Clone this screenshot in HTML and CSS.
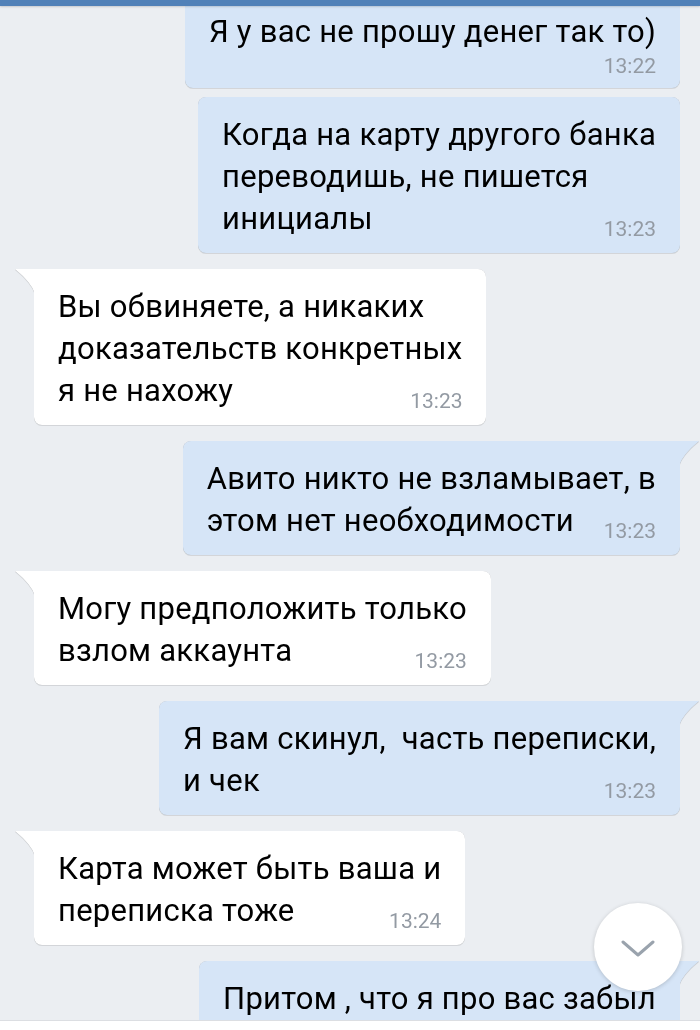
FILE: index.html
```html
<!DOCTYPE html>
<html lang="ru">
<head>
<meta charset="utf-8">
<title>Чат</title>
<link rel="stylesheet" href="styles.css">
</head>
<body>
<div class="screen">
  <div class="topbar"></div>
  <div class="chat">
    <div class="list">
      <div class="row out">
        <div class="bubble out">Я у вас не прошу денег так то)<span class="time below">13:22</span></div>
      </div>
      <div class="row out cont">
        <div class="bubble out">Когда на карту другого банка<br>переводишь, не пишется<br>инициалы<span class="time">13:23</span></div>
      </div>
      <div class="row in">
        <div class="bubble in tail">Вы обвиняете, а никаких<br>доказательств конкретных<br>я не нахожу<span class="time">13:23</span></div>
      </div>
      <div class="row out">
        <div class="bubble out tail">Авито никто не взламывает, в<br>этом нет необходимости<span class="time">13:23</span></div>
      </div>
      <div class="row in">
        <div class="bubble in tail">Могу предположить только<br>взлом аккаунта<span class="time">13:23</span></div>
      </div>
      <div class="row out">
        <div class="bubble out tail">Я вам скинул,&nbsp; часть переписки,<br>и чек<span class="time">13:23</span></div>
      </div>
      <div class="row in">
        <div class="bubble in tail">Карта может быть ваша и<br>переписка тоже<span class="time">13:24</span></div>
      </div>
      <div class="row out">
        <div class="bubble out tail last">Притом , что я про вас забыл</div>
      </div>
    </div>
    <button class="scroll-down" aria-label="Вниз">
      <svg width="34" height="18" viewBox="0 0 34 18"><path d="M2 2 L17 15 L32 2" fill="none" stroke="#9aa3ad" stroke-width="3" stroke-linecap="round" stroke-linejoin="round"/></svg>
    </button>
  </div>
  <div class="footer"></div>
</div>
</body>
</html>
```
FILE: styles.css
```css
* { box-sizing: border-box; }
html, body {
  margin: 0;
  padding: 0;
  background: #ebeef2;
}
.screen {
  width: 700px;
  height: 1030px;
  display: flex;
  flex-direction: column;
  overflow: hidden;
  font-family: Roboto, "Noto Sans", sans-serif;
}
.topbar {
  height: 6px;
  flex: none;
  background: #5181b8;
  box-shadow: 0 1px 2px rgba(0,0,0,0.15);
  z-index: 2;
}
.chat {
  position: relative;
  flex: 1;
  overflow: hidden;
}
.list {
  display: flex;
  flex-direction: column;
  gap: 16px;
  margin-top: -12px;
}
.row {
  display: flex;
}
.row.out {
  justify-content: flex-end;
  padding-right: 20px;
}
.row.in {
  justify-content: flex-start;
  padding-left: 34px;
}
.row.cont {
  margin-top: -7px;
}
.bubble {
  position: relative;
  padding: 17px 24px 13px 24px;
  font-size: 31px;
  line-height: 42px;
  letter-spacing: 0.25px;
  color: #000;
  border-radius: 8px;
  filter: drop-shadow(0 0 0.6px rgba(0,0,0,0.22)) drop-shadow(0 1px 0.6px rgba(0,0,0,0.10));
}
.bubble.last {
  padding-bottom: 40px;
}
.bubble.in {
  background: #ffffff;
}
.bubble.out {
  background: #d6e5f7;
}
.bubble.in.tail { border-top-left-radius: 0; }
.bubble.out.tail { border-top-right-radius: 0; }
.bubble.tail::before {
  content: "";
  position: absolute;
  top: 0;
  width: 20px;
  height: 25px;
}
.bubble.in.tail::before {
  left: -19px;
  background: #ffffff;
  clip-path: path("M0 0 L20 0 L20 25 Q17 14 0 0 Z");
}
.bubble.out.tail::before {
  right: -19px;
  background: #d6e5f7;
  clip-path: path("M20 0 L0 0 L0 25 Q3 14 20 0 Z");
}
.time {
  float: right;
  margin-left: 24px;
  margin-top: 21px;
  font-size: 21px;
  line-height: 21px;
  letter-spacing: 0;
  color: #939aa3;
}
.time.below {
  float: none;
  display: block;
  text-align: right;
  margin-top: 2px;
  margin-bottom: -2px;
  line-height: 22px;
}
.scroll-down {
  position: absolute;
  left: 594px;
  top: 897px;
  width: 88px;
  height: 88px;
  border: none;
  border-radius: 50%;
  background: #ffffff;
  box-shadow: 0 1px 4px rgba(0,0,0,0.18);
  display: flex;
  align-items: center;
  justify-content: center;
  padding: 0;
  padding-top: 4px;
}
.footer {
  height: 10px;
  flex: none;
  background: #ffffff;
  border-top: 1px solid #dcdee2;
}
```
